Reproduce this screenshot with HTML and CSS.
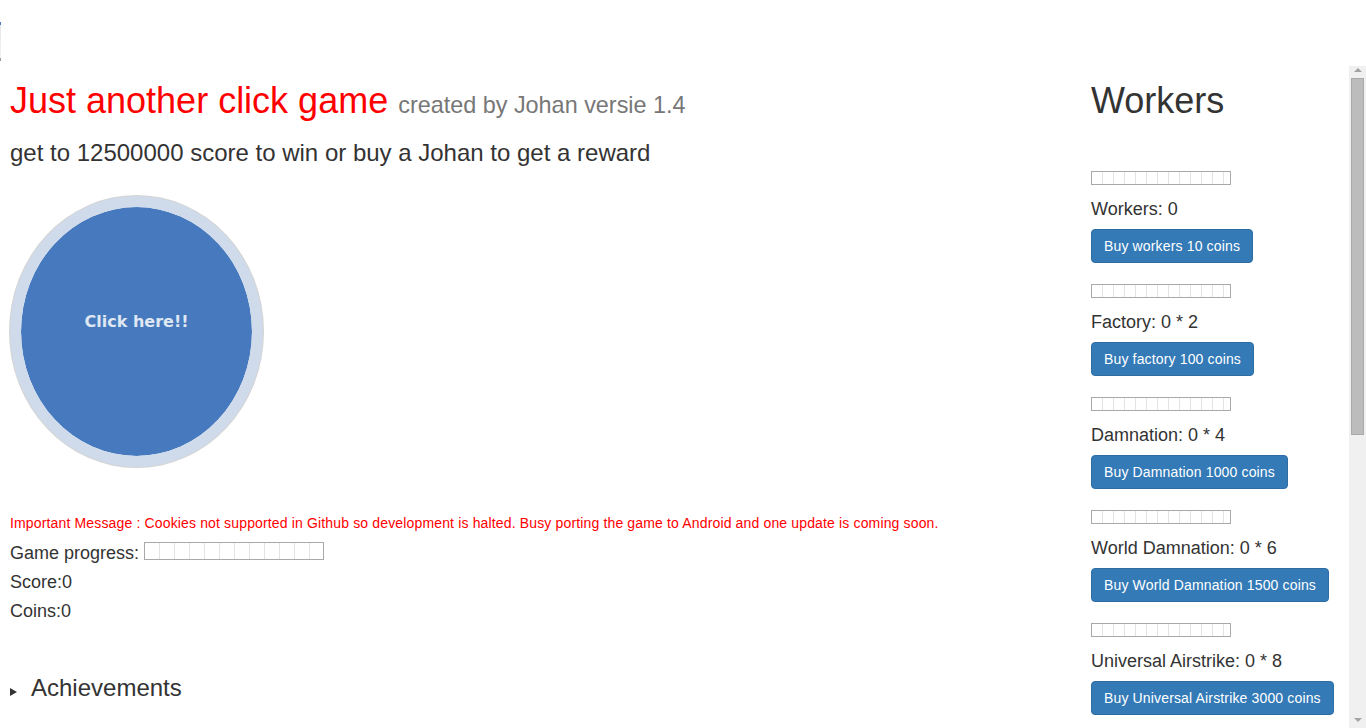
FILE: index.html
```html
<!DOCTYPE html>
<html lang="nl">
<head>
<meta charset="utf-8">
<title>Just another click game</title>
<link rel="stylesheet" href="styles.css">
</head>
<body>
<div class="topbar"><div class="stub"></div></div>
<div class="scroller">
  <div class="viewport">
    <div class="page">
      <main class="main-col">
        <h1 class="title">Just another click game <small class="subtitle">created by Johan versie 1.4</small></h1>
        <h3 class="goal">get to 12500000 score to win or buy a Johan to get a reward</h3>
        <button class="clicker" type="button">Click here!!</button>
        <p class="notice">Important Message : Cookies not supported in Github so development is halted. Busy porting the game to Android and one update is coming soon.</p>
        <div class="stats">
          <div class="stat">Game progress: <span class="meter meter-lg"></span></div>
          <div class="stat">Score:0</div>
          <div class="stat">Coins:0</div>
        </div>
        <details class="achievements">
          <summary class="ach-summary">Achievements</summary>
        </details>
      </main>
      <aside class="side-col">
        <h1 class="side-title">Workers</h1>
        <div class="worker">
          <span class="meter meter-sm"></span>
          <p class="worker-label">Workers: 0</p>
          <button class="buy" type="button">Buy workers 10 coins</button>
        </div>
        <div class="worker">
          <span class="meter meter-sm"></span>
          <p class="worker-label">Factory: 0 * 2</p>
          <button class="buy" type="button">Buy factory 100 coins</button>
        </div>
        <div class="worker">
          <span class="meter meter-sm"></span>
          <p class="worker-label">Damnation: 0 * 4</p>
          <button class="buy" type="button">Buy Damnation 1000 coins</button>
        </div>
        <div class="worker">
          <span class="meter meter-sm"></span>
          <p class="worker-label">World Damnation: 0 * 6</p>
          <button class="buy" type="button">Buy World Damnation 1500 coins</button>
        </div>
        <div class="worker">
          <span class="meter meter-sm"></span>
          <p class="worker-label">Universal Airstrike: 0 * 8</p>
          <button class="buy" type="button">Buy Universal Airstrike 3000 coins</button>
        </div>
      </aside>
    </div>
  </div>
  <div class="vscroll" aria-hidden="true">
    <div class="vs-btn"><span class="arrow-up"></span></div>
    <div class="vs-track"><div class="vs-thumb"></div></div>
    <div class="vs-btn"><span class="arrow-down"></span></div>
  </div>
</div>
</body>
</html>
```
FILE: styles.css
```css
html, body {
  margin: 0;
  padding: 0;
  height: 100%;
  overflow: hidden;
  background: #fff;
}
body {
  font-family: "Liberation Sans", Arial, Helvetica, sans-serif;
  color: #333;
  font-size: 14px;
  line-height: 1.42857;
}
.topbar {
  height: 66px;
  box-sizing: border-box;
  padding-top: 22px;
}
.stub {
  width: 1px;
  height: 39px;
  background: linear-gradient(#4d7dbb 0 3px, #e6e6e6 3px, #f2f2f2 36px, #9a9a9a 36px);
}
.scroller {
  height: calc(100vh - 66px);
  display: flex;
}
.viewport {
  flex: 1;
  min-width: 0;
  overflow: hidden;
}
.vscroll {
  width: 17px;
  flex: none;
  display: flex;
  flex-direction: column;
  background: #f0f0f0;
}
.vs-btn {
  height: 12px;
  flex: none;
  display: flex;
  justify-content: center;
  align-items: flex-start;
  padding-top: 2px;
  box-sizing: border-box;
}
.arrow-up {
  width: 0;
  height: 0;
  border-left: 4px solid transparent;
  border-right: 4px solid transparent;
  border-bottom: 4px solid #a3a3a3;
}
.arrow-down {
  width: 0;
  height: 0;
  border-left: 4px solid transparent;
  border-right: 4px solid transparent;
  border-top: 4px solid #a3a3a3;
}
.vs-track {
  flex: 1;
  padding: 0 2px;
}
.vs-thumb {
  height: 357px;
  box-sizing: border-box;
  background: #bcbcbc;
  border: 1px solid #a9a9a9;
}
.page {
  display: grid;
  grid-template-columns: 1081px 1fr;
  padding-left: 10px;
}
.title, .side-title {
  font-size: 36px;
  font-weight: 400;
  line-height: 1.1;
  margin: 15px 0 0;
}
.title {
  color: #f00;
}
.side-title {
  color: #333;
}
.subtitle {
  font-size: 65%;
  line-height: 1;
  color: #777;
  font-weight: 400;
}
.goal {
  font-size: 24px;
  font-weight: 400;
  line-height: 1.1;
  margin: 19px 0 0;
  color: #333;
}
.clicker {
  display: flex;
  align-items: center;
  justify-content: center;
  box-sizing: border-box;
  width: 253px;
  height: 271px;
  margin: 30px 0 0;
  padding: 0 0 20px;
  border: 11px solid #cfdbea;
  border-radius: 50%;
  box-shadow: 0 0 0 1px #d4d4d4;
  background: #4679bd;
  background-clip: padding-box;
  color: #dfe7f3;
  font-family: "DejaVu Sans", Verdana, sans-serif;
  font-weight: 700;
  font-size: 16px;
  cursor: pointer;
}
.notice {
  margin: 46px 0 0;
  color: #f00;
  font-size: 14px;
  line-height: 20px;
  letter-spacing: 0.15px;
}
.stats {
  margin-top: 6px;
}
.stat {
  font-size: 18px;
  line-height: 29px;
  color: #333;
}
.meter {
  display: inline-block;
  box-sizing: border-box;
  border: 1px solid #a9a9a9;
  background: repeating-linear-gradient(to right, #fff 0 10px, #e3e3e3 10px 11px);
}
.meter-lg {
  width: 180px;
  height: 18px;
  vertical-align: -1px;
  background: repeating-linear-gradient(to right, #fff 0 14px, #e3e3e3 14px 15px);
}
.meter-sm {
  display: block;
  width: 140px;
  height: 14px;
}
.achievements {
  margin-top: 49px;
}
.ach-summary {
  list-style: none;
  font-size: 24px;
  line-height: 1.1;
  color: #333;
  cursor: pointer;
}
.ach-summary::-webkit-details-marker {
  display: none;
}
.ach-summary::before {
  content: "";
  display: inline-block;
  width: 0;
  height: 0;
  border-left: 7px solid #333;
  border-top: 4px solid transparent;
  border-bottom: 4px solid transparent;
  margin-right: 14px;
}
.side-col {
  display: flex;
  flex-direction: column;
  align-items: flex-start;
}
.side-title {
  margin-bottom: 50px;
}
.worker {
  display: flex;
  flex-direction: column;
  align-items: flex-start;
  margin-bottom: 21px;
}
.worker-label {
  margin: 11px 0 7px;
  font-size: 18px;
  line-height: 26px;
  color: #333;
}
.buy {
  font-family: "Liberation Sans", Arial, Helvetica, sans-serif;
  font-size: 14px;
  line-height: 20px;
  letter-spacing: 0.15px;
  padding: 6px 12px;
  color: #fff;
  background: #337ab7;
  border: 1px solid #2e6da4;
  border-radius: 4px;
  cursor: pointer;
}
```
